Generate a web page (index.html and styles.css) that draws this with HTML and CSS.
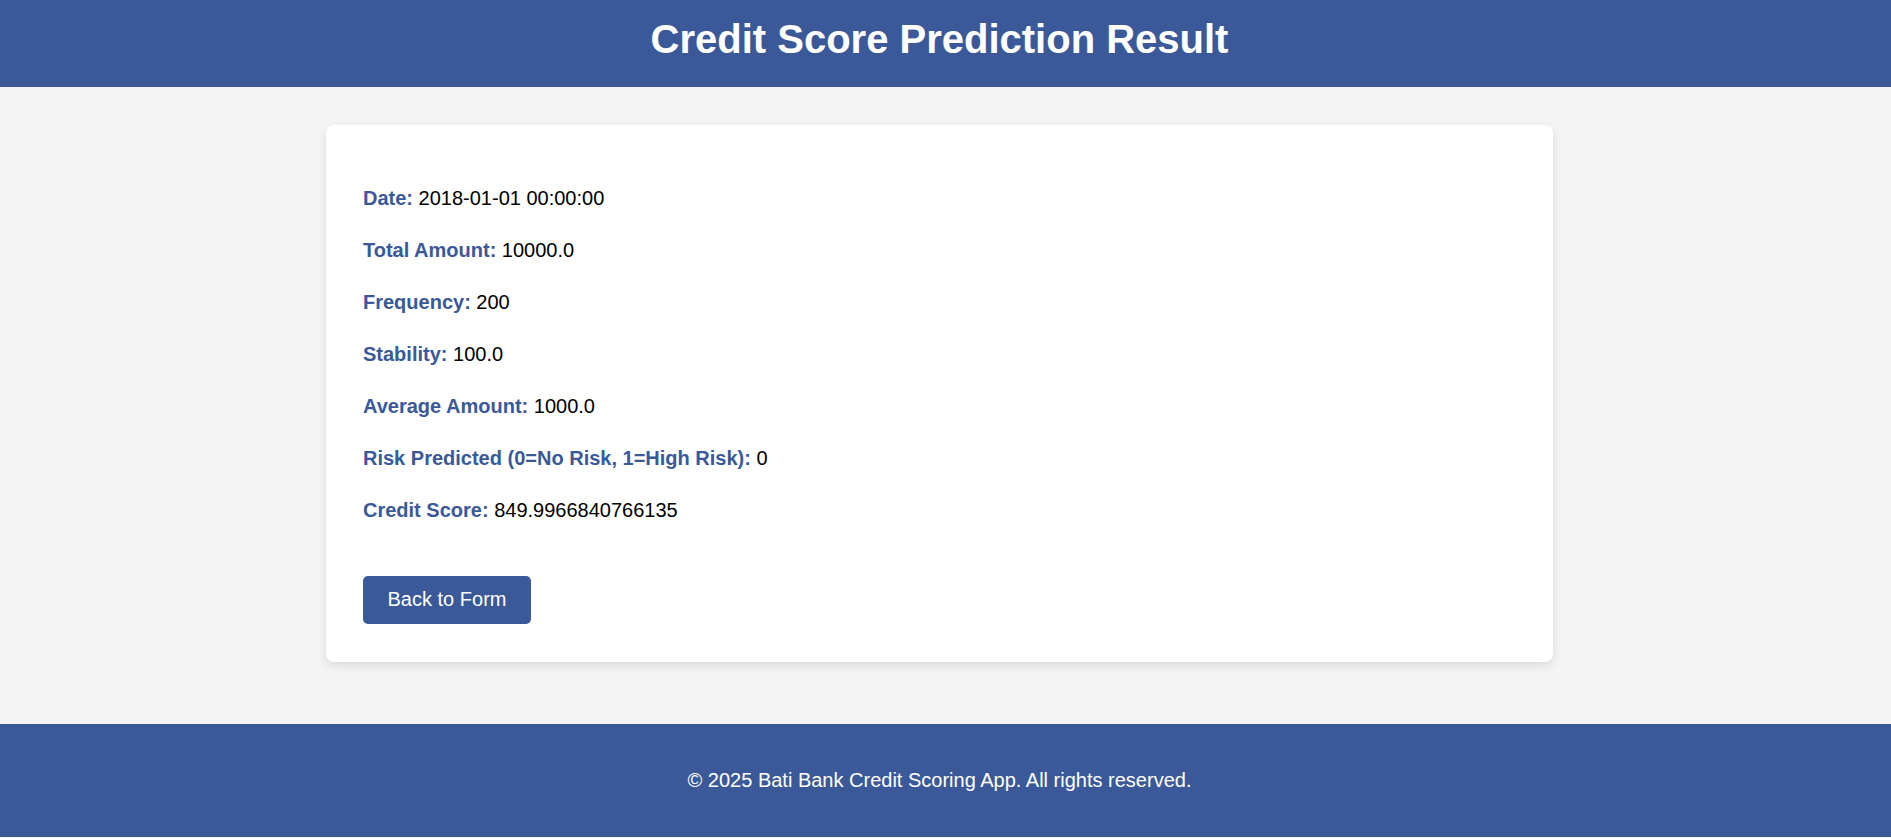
FILE: index.html
```html
<!DOCTYPE html>
<html lang="en">
<head>
<meta charset="utf-8">
<title>Credit Score Prediction Result</title>
<link rel="stylesheet" href="styles.css">
</head>
<body>
<header class="site-header">
  <h1 class="site-title">Credit Score Prediction Result</h1>
</header>
<main class="main">
  <section class="card">
    <div class="details">
      <p class="row"><span class="label">Date:</span> 2018-01-01 00:00:00</p>
      <p class="row"><span class="label">Total Amount:</span> 10000.0</p>
      <p class="row"><span class="label">Frequency:</span> 200</p>
      <p class="row"><span class="label">Stability:</span> 100.0</p>
      <p class="row"><span class="label">Average Amount:</span> 1000.0</p>
      <p class="row"><span class="label">Risk Predicted (0=No Risk, 1=High Risk):</span> 0</p>
      <p class="row"><span class="label">Credit Score:</span> 849.9966840766135</p>
    </div>
    <a class="btn" href="#">Back to Form</a>
  </section>
</main>
<footer class="site-footer">
  <p class="footer-text">&copy; 2025 Bati Bank Credit Scoring App. All rights reserved.</p>
</footer>
</body>
</html>
```
FILE: styles.css
```css
* { box-sizing: border-box; }
html, body { margin: 0; padding: 0; }
body {
  font-family: "Liberation Sans", Arial, sans-serif;
  background: #f4f4f4;
  color: #000;
}
.site-header {
  background: #3b5998;
  color: #fff;
  height: 87px;
  padding: 16px 12px 0 0;
}
.site-title {
  margin: 0;
  text-align: center;
  font-size: 40px;
  line-height: 46px;
  font-weight: bold;
}
.main {
  padding: 38px 12px 62px 0;
}
.card {
  width: 1227px;
  margin: 0 auto;
  background: #fff;
  border-radius: 8px;
  box-shadow: 0 4px 10px rgba(0, 0, 0, 0.1);
  padding: 62px 37px 38px;
  height: 537px;
}
.details {
  display: flex;
  flex-direction: column;
  gap: 29px;
}
.row {
  margin: 0;
  font-size: 20px;
  line-height: 23px;
}
.label {
  color: #3b5998;
  font-weight: bold;
}
.btn {
  display: inline-block;
  margin-top: 54px;
  background: #3b5998;
  color: #fff;
  text-decoration: none;
  font-size: 20px;
  line-height: 23px;
  width: 168px;
  height: 48px;
  padding: 12px 0 13px;
  text-align: center;
  border-radius: 5px;
}
.site-footer {
  background: #3b5998;
  color: #fff;
  height: 113px;
  padding: 45px 12px 0 0;
}
.footer-text {
  margin: 0;
  text-align: center;
  font-size: 20px;
  line-height: 23px;
}
```
